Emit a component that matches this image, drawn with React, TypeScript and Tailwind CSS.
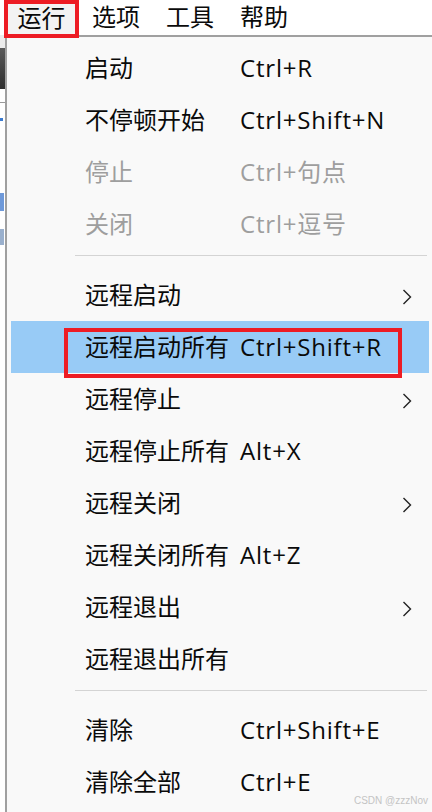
import React from "react";

type Item =
  | { kind: "item"; label: string; shortcut?: string; disabled?: boolean; sub?: boolean; active?: boolean }
  | { kind: "sep" };

const items: Item[] = [
  { kind: "item", label: "启动", shortcut: "Ctrl+R" },
  { kind: "item", label: "不停顿开始", shortcut: "Ctrl+Shift+N" },
  { kind: "item", label: "停止", shortcut: "Ctrl+句点", disabled: true },
  { kind: "item", label: "关闭", shortcut: "Ctrl+逗号", disabled: true },
  { kind: "sep" },
  { kind: "item", label: "远程启动", sub: true },
  { kind: "item", label: "远程启动所有", shortcut: "Ctrl+Shift+R", active: true },
  { kind: "item", label: "远程停止", sub: true },
  { kind: "item", label: "远程停止所有", shortcut: "Alt+X" },
  { kind: "item", label: "远程关闭", sub: true },
  { kind: "item", label: "远程关闭所有", shortcut: "Alt+Z" },
  { kind: "item", label: "远程退出", sub: true },
  { kind: "item", label: "远程退出所有" },
  { kind: "sep" },
  { kind: "item", label: "清除", shortcut: "Ctrl+Shift+E" },
  { kind: "item", label: "清除全部", shortcut: "Ctrl+E" },
];

function Chevron() {
  return (
    <svg width="10" height="18" viewBox="0 0 10 18" className="mt-[3px] shrink-0">
      <path d="M1.5 2 L8.5 9 L1.5 16" fill="none" stroke="#222" strokeWidth="1.4" />
    </svg>
  );
}

export default function App() {
  return (
    <div
      className="relative w-[432px] h-[812px] overflow-hidden bg-white text-[24px] text-[#0a0a0a]"
      style={{ fontFamily: '"Open Sans", "Noto Sans CJK SC", sans-serif' }}
    >
      {/* menu bar */}
      <div className="relative z-10 flex h-[35px] pl-[4px] bg-white">
        {["运行", "选项", "工具", "帮助"].map((t, i) => (
          <div
            key={t}
            className={
              i === 0
                ? "h-[38px] w-[75px] shrink-0 border-[4px] border-[#ed1c24] bg-[#f3f3f3] text-center leading-[27px] whitespace-nowrap"
                : "h-[35px] w-[74px] shrink-0 pt-[3px] text-center leading-[28px] whitespace-nowrap"
            }
          >
            {t}
          </div>
        ))}
      </div>

      <div className="flex h-[777px]">
        {/* background app strip */}
        <div className="flex w-[5px] shrink-0 flex-col bg-white">
          <div className="h-[13px] bg-[#ececec]" />
          <div className="h-[41px] bg-gradient-to-b from-[#5a5a5a] to-[#2e2e2e]" />
          <div className="h-[13px] bg-white" />
          <div className="h-[1px] bg-[#9a9a9a]" />
          <div className="h-[15px]" />
          <div className="h-[3px] w-[3px] bg-[#3b7bd0]" />
          <div className="h-[72px]" />
          <div className="h-[18px] w-[4px] bg-[#4a7fcf] opacity-80" />
          <div className="h-[18px]" />
          <div className="h-[16px] w-[4px] bg-[#6f8fb8] opacity-70" />
        </div>

        {/* dropdown panel */}
        <div className="flex-1 border-l-2 border-t-2 border-[#a0a0a0] bg-[#f9f9f9] pt-[5px]">
          {items.map((it, idx) =>
            it.kind === "sep" ? (
              <div key={idx} className="h-[19px] pt-[5px] pl-[68px] pr-[5px]">
                <div className="h-[1px] bg-[#d4d4d4]" />
              </div>
            ) : (
              <div
                key={idx}
                className={
                  "relative ml-[4px] mr-[3px] flex h-[52px] items-center pl-[74px] pr-[17px] leading-[52px] " +
                  (it.active ? "bg-[#98cbf6]" : "") +
                  (it.disabled ? " text-[#9e9e9e]" : "")
                }
              >
                <span className="w-[155px] shrink-0 whitespace-nowrap">{it.label}</span>
                <span className="flex-1 whitespace-nowrap tracking-[0.8px]">{it.shortcut ?? ""}</span>
                {it.sub ? <Chevron /> : null}
                {it.active ? (
                  <div className="absolute left-[53px] top-[7px] h-[50px] w-[338px] border-[4px] border-[#ed1c24]" />
                ) : null}
              </div>
            )
          )}
        </div>
      </div>

      <div
        className="absolute bottom-[5px] right-[4px] text-[10px] leading-[12px] text-[#c4c4c4]"
        style={{ fontFamily: '"Liberation Sans", sans-serif' }}
      >
        CSDN @zzzNov
      </div>
    </div>
  );
}
